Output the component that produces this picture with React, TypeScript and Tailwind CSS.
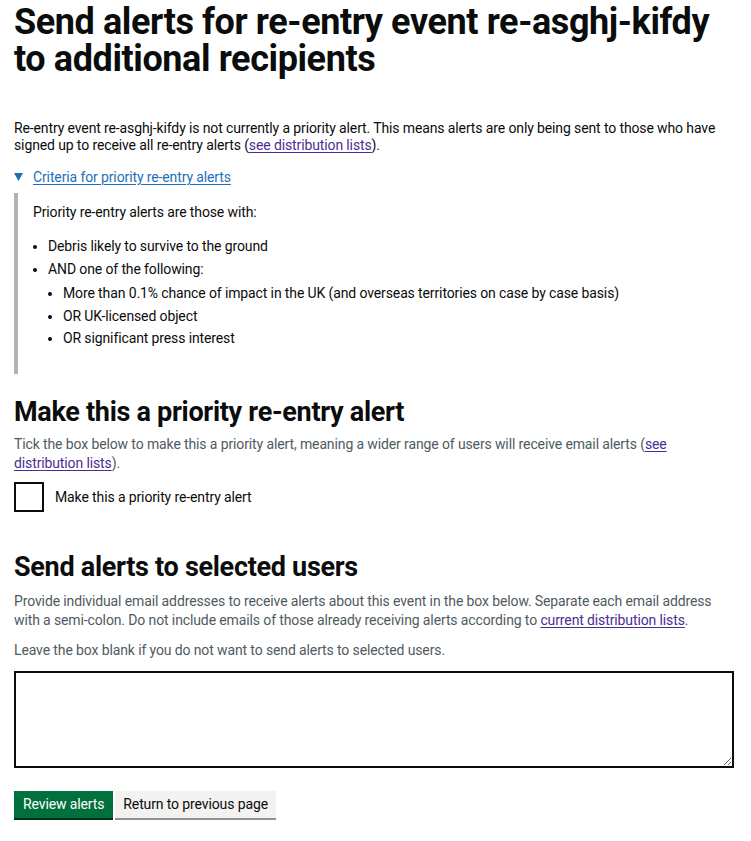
// Send alerts page (GOV.UK style form)
const font = { fontFamily: '"Roboto", "Liberation Sans", sans-serif' };

const Link = ({ children }: { children: React.ReactNode }) => (
	<a href="#" className="text-[#4c2c92] underline underline-offset-2 decoration-1">
		{children}
	</a>
);

const App = () => {
	return (
		<div className="bg-white text-[#0b0c0c] px-[14px] pt-[4px] pb-[20px] w-[751px] text-[14px] tracking-[-0.12px]" style={font}>
			<h1 className="text-[36px] leading-[37px] font-bold tracking-[-0.4px] mb-[42px]">
				Send alerts for re-entry event re-asghj-kifdy to additional recipients
			</h1>

			<p className="leading-[17px] mb-[14px]">
				Re-entry event re-asghj-kifdy is not currently a priority alert. This means alerts are only being sent to those who have signed up to receive all re-entry alerts (<Link>see distribution lists</Link>).
			</p>

			{/* criteria details */}
			<div className="mb-[22px]">
				<div className="flex items-center gap-[10px] text-[#1d70b8] leading-[18px]">
					<svg width="9" height="8" viewBox="0 0 9 8" className="shrink-0">
						<polygon points="0,0 9,0 4.5,8" fill="#1d70b8" />
					</svg>
					<span className="underline underline-offset-2 decoration-1">Criteria for priority re-entry alerts</span>
				</div>
				<div className="mt-[7px] border-l-[4px] border-[#b1b4b6] pl-[15px] pt-[10px] pb-[27px] leading-[18px]">
					<p className="mb-[16px]">Priority re-entry alerts are those with:</p>
					<ul className="list-disc pl-[15px] space-y-[5px]">
						<li>Debris likely to survive to the ground</li>
						<li>
							AND one of the following:
							<ul className="list-disc pl-[15px] mt-[6px] space-y-[4.5px]">
								<li>More than 0.1% chance of impact in the UK (and overseas territories on case by case basis)</li>
								<li>OR UK-licensed object</li>
								<li>OR significant press interest</li>
							</ul>
						</li>
					</ul>
				</div>
			</div>

			{/* priority checkbox */}
			<h2 className="text-[27px] leading-[32px] font-bold tracking-[-0.3px] mb-[7px]">Make this a priority re-entry alert</h2>
			<p className="text-[#505a5f] leading-[19px] mb-[9px] pr-[40px]">
				Tick the box below to make this a priority alert, meaning a wider range of users will receive email alerts (<Link>see distribution lists</Link>).
			</p>
			<label className="flex items-center gap-[11px] mb-[39px]">
				<span className="w-[30px] h-[30px] border-2 border-[#0b0c0c] bg-white shrink-0" />
				<span>Make this a priority re-entry alert</span>
			</label>

			{/* selected users */}
			<h2 className="text-[27px] leading-[32px] font-bold tracking-[-0.3px] mb-[9px]">Send alerts to selected users</h2>
			<p className="text-[#505a5f] leading-[19px] mb-[11px] pr-[22px]">
				Provide individual email addresses to receive alerts about this event in the box below. Separate each email address with a semi-colon. Do not include emails of those already receiving alerts according to <Link>current distribution lists</Link>.
			</p>
			<p className="text-[#505a5f] leading-[19px] mb-[11px]">
				Leave the box blank if you do not want to send alerts to selected users.
			</p>
			<textarea className="block w-[720px] h-[97px] border-2 border-[#0b0c0c] mb-[23px]" />

			<div className="flex gap-[2px]">
				<button className="bg-[#00703c] text-white px-[9px] h-[27px] shadow-[0_2px_0_#002d18]">Review alerts</button>
				<button className="bg-[#f3f2f1] text-[#0b0c0c] px-[8px] h-[27px] shadow-[0_2px_0_#929191]">Return to previous page</button>
			</div>
		</div>
	);
};

export default App;
